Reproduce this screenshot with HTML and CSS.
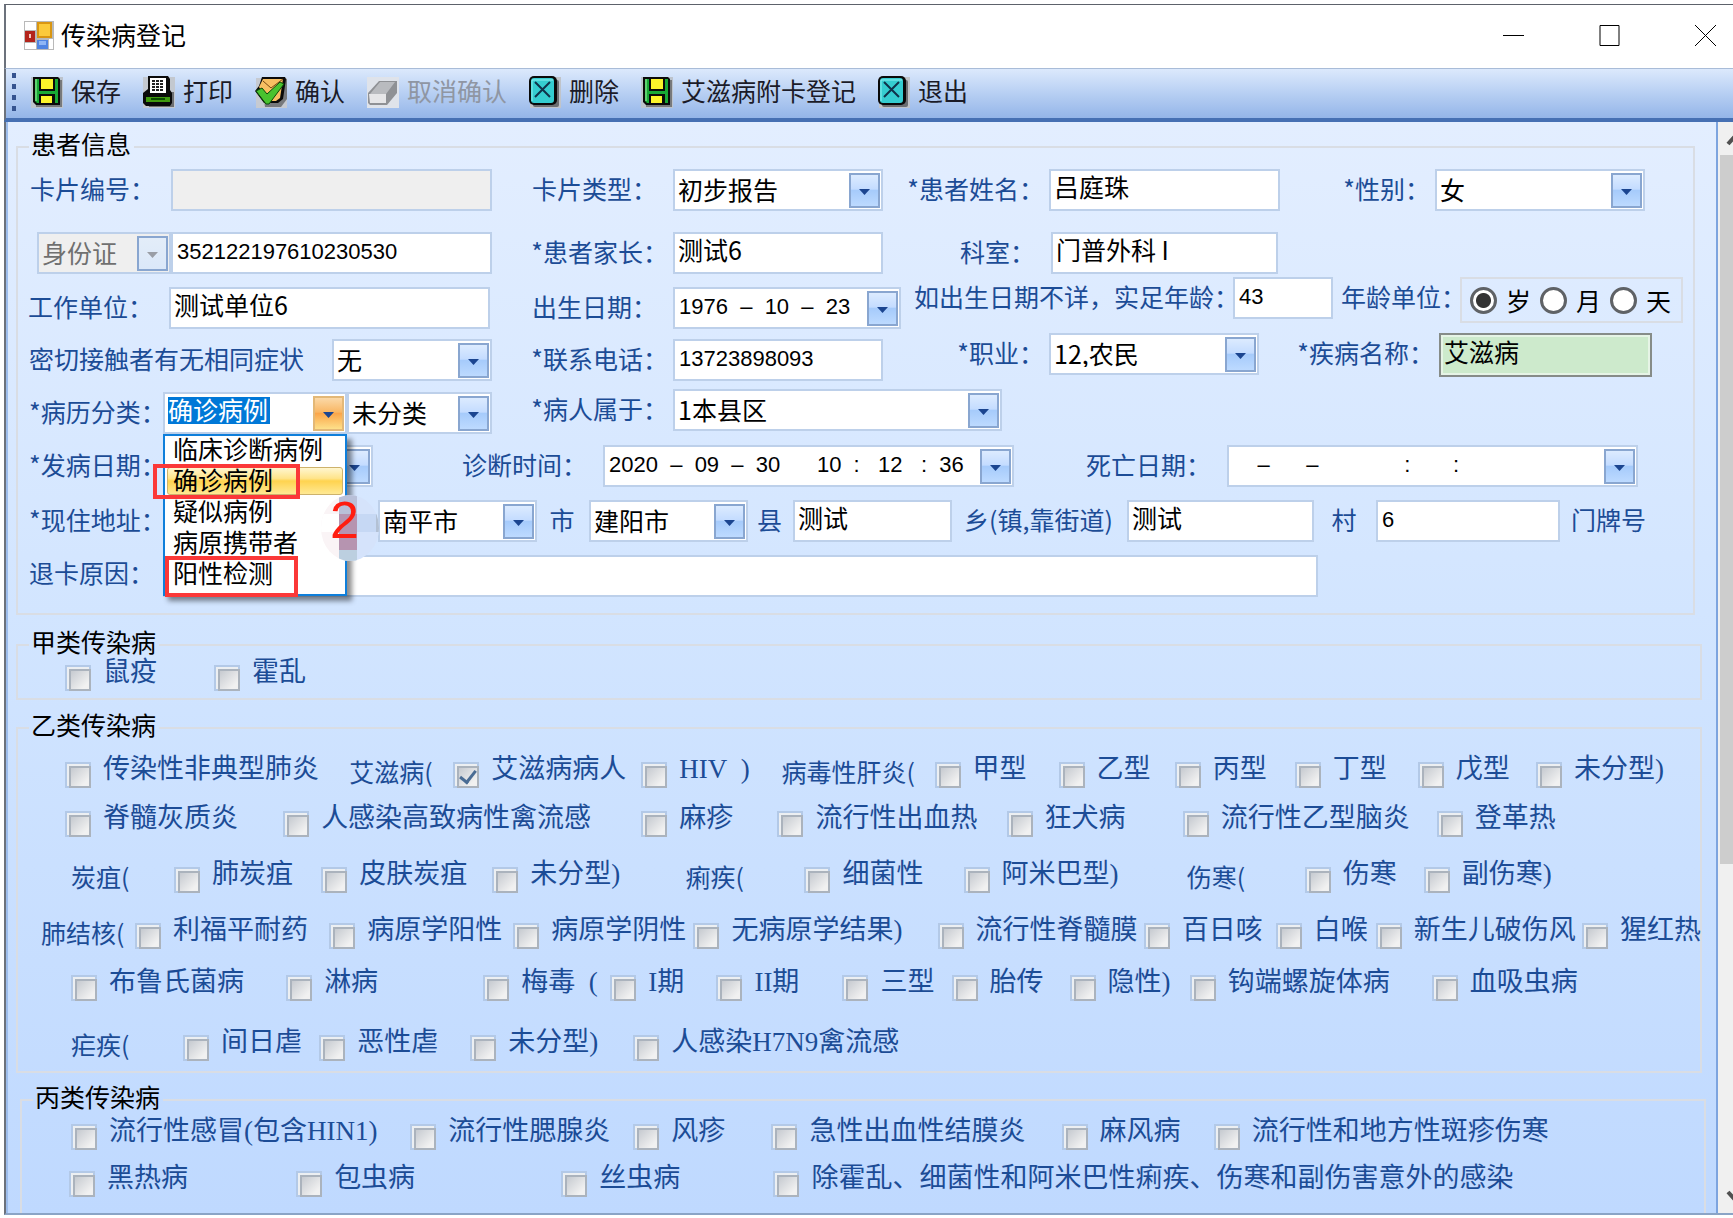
FILE: index.html
```html
<!DOCTYPE html>
<html lang="zh-CN">
<head>
  <meta charset="UTF-8">
  <link rel="stylesheet" href="styles.css">

  <title>传染病登记</title>
</head>
<body>
  <!-- shared toolbar icons -->
  <svg class="defs" aria-hidden="true">
    <symbol id="icon-save" viewBox="0 0 32 32">
      <rect x="0" y="1" width="32" height="31" fill="#bcc3cc"/>
      <path d="M5 4h26v27H5z" fill="#77797c"/>
      <path d="M2 1h25l2 2v26H5l-3-3z" fill="#0a0a0a"/>
      <path d="M4 3h23v24H6l-2-2z" fill="#18a835"/>
      <path d="M8 2h16v13H8z" fill="#0a0a0a"/>
      <path d="M10 3h12v10H10z" fill="#fbf42a"/>
      <path d="M8 18h16v10H8z" fill="#0a0a0a"/>
      <path d="M10 20h11v7H10z" fill="#fbf42a"/>
      <path d="M4 3h2v22H4z" fill="#5fd070"/>
    </symbol>
    <symbol id="icon-print" viewBox="0 0 32 32">
      <rect x="0" y="1" width="32" height="31" fill="#c3c8cf"/>
      <path d="M4 16h27v15H6z" fill="#6d6f72"/>
      <path d="M5 0h20l2 3v11l2 3v10l-2 3H3l-3-3V17l5-4z" fill="#0a0a0a"/>
      <path d="M7 2h16v15H7z" fill="#fff"/>
      <path d="M9 5h12M9 8h12M9 11h12M9 14h12" stroke="#222" stroke-width="2" stroke-dasharray="3 1"/>
      <path d="M3 21h24v5H3z" fill="#3f9a10"/>
      <path d="M8 23h14" stroke="#0a4a00" stroke-width="2"/>
    </symbol>
    <symbol id="icon-ok" viewBox="0 0 32 32">
      <rect x="1" y="2" width="31" height="30" fill="#c6cad1"/>
      <path d="M6 3h26v20l-6 8H10z" fill="#77797c"/>
      <path d="M7 1h23l1 2-3 20-5 4H9L0 15l4-5z" fill="#0a0a0a"/>
      <path d="M8 3h20l-3 19-4 3h-8L4 11z" fill="#f7bf62"/>
      <path d="M8 5l8 7L28 3" fill="none" stroke="#7a4a12" stroke-width="1"/>
      <path d="M1 15l6-3 5 6L25 6l4 2-15 20h-3z" fill="#49c22f" stroke="#0b4a08"/>
    </symbol>
    <symbol id="icon-undo" viewBox="0 0 32 32">
      <rect x="0" y="1" width="32" height="31" fill="#dfe3ea"/>
      <path d="M1 17L12 5h18v12L20 29H3l-2-2z" fill="#8f9195"/>
      <path d="M3 18L13 6h15l-9 12z" fill="#b9bbbf"/>
      <path d="M2 18h17v9H3z" fill="#e6e6e8"/>
    </symbol>
    <symbol id="icon-delete" viewBox="0 0 32 32">
      <rect x="1" y="1" width="31" height="31" fill="#c0c4ca"/>
      <rect x="4" y="4" width="26" height="27" rx="2" fill="#6c6e71"/>
      <rect x="0" y="0" width="28" height="29" rx="5" fill="#0a0a0a"/>
      <rect x="2" y="2" width="23" height="25" rx="3" fill="#35cdd0"/>
      <path d="M3 25V4h21" fill="none" stroke="#8df0f0"/>
      <path d="M6 6l15 15M21 6L6 21" stroke="#10324a" stroke-width="2"/>
    </symbol>
  </svg>

  <div class="window">
    <header class="titlebar">
      <svg class="app-icon" viewBox="0 0 30 30">
        <rect width="30" height="29" fill="#b9b9b9"/>
        <path d="M1 1h11v8H1zM1 22h11v6H1zM25 18h4v10h-4z" fill="#fff"/>
        <rect x="13" y="1" width="15" height="16" fill="#d99612"/>
        <rect x="15" y="3" width="11" height="12" fill="#fbca3b"/>
        <rect x="1" y="10" width="10" height="11" fill="#b3241b"/>
        <rect x="5" y="13" width="2" height="4" fill="#f7c6bd"/>
        <rect x="13" y="19" width="11" height="9" fill="#4f84e2"/>
        <rect x="15" y="20" width="7" height="4" fill="#8fb6f5"/>
      </svg>
      <h1>传染病登记</h1>
      <button class="win-btn" aria-label="最小化"><svg viewBox="0 0 21 21"><path d="M0 10.500h21"/></svg></button>
      <button class="win-btn" aria-label="最大化"><svg viewBox="0 0 21 21"><path d="M1 .5h19v20H1z"/></svg></button>
      <button class="win-btn" aria-label="关闭"><svg viewBox="0 0 21 21"><path d="M0 0l21 21M21 0L0 21"/></svg></button>
    </header>

    <nav class="toolbar">
      <span class="grip"></span>
      <button><svg><use href="#icon-save"/></svg>保存</button>
      <button><svg><use href="#icon-print"/></svg>打印</button>
      <button><svg><use href="#icon-ok"/></svg>确认</button>
      <button disabled><svg><use href="#icon-undo"/></svg>取消确认</button>
      <button><svg><use href="#icon-delete"/></svg>删除</button>
      <button><svg><use href="#icon-save"/></svg>艾滋病附卡登记</button>
      <button><svg><use href="#icon-delete"/></svg>退出</button>
    </nav>

    <div class="content">
      <form class="panel">
        <fieldset class="group patient">
          <legend>患者信息</legend>

          <div class="row row-card">
            <label for="card-no">卡片编号：</label>
            <input id="card-no" type="text" disabled>
            <label for="card-type">卡片类型：</label>
            <div class="combo"><select id="card-type"><option>初步报告</option></select><span class="drop"></span></div>
            <label class="tight" for="name">*患者姓名：</label>
            <input id="name" type="text" value="吕庭珠">
            <label class="tight" for="sex">*性别：</label>
            <div class="combo"><select id="sex"><option>女</option></select><span class="drop"></span></div>
          </div>

          <div class="row row-id">
            <div class="combo off"><select id="id-type" aria-label="证件类型" disabled><option>身份证</option></select><span class="drop"></span></div>
            <input class="num" id="id-no" type="text" aria-label="证件号码" value="352122197610230530">
            <label class="tight" for="parent">*患者家长：</label>
            <input id="parent" type="text" value="测试6">
            <label for="dept">科室：</label>
            <input id="dept" type="text" value="门普外科 I">
          </div>

          <div class="row row-birth">
            <label for="company">工作单位：</label>
            <input id="company" type="text" value="测试单位6">
            <label for="birthday">出生日期：</label>
            <div class="combo"><input class="num" id="birthday" type="text" value="1976  –  10  –  23"><button class="drop" type="button" aria-label="选择日期"></button></div>
            <label class="raised snug" for="age">如出生日期不详，实足年龄：</label>
            <input class="num raised" id="age" type="text" value="43">
            <span class="caption raised snug" id="age-unit">年龄单位：</span>
            <div class="radios raised" role="radiogroup" aria-labelledby="age-unit">
              <label><input type="radio" name="unit" checked>岁</label>
              <label><input type="radio" name="unit">月</label>
              <label><input type="radio" name="unit">天</label>
            </div>
          </div>

          <div class="row row-contact">
            <label class="lead" for="contact">密切接触者有无相同症状</label>
            <div class="combo"><select id="contact"><option>无</option></select><span class="drop"></span></div>
            <label class="tight" for="phone">*联系电话：</label>
            <input class="num" id="phone" type="text" value="13723898093">
            <label class="tight raised" for="job">*职业：</label>
            <div class="combo raised"><select id="job"><option>12,农民</option></select><span class="drop"></span></div>
            <label class="tight raised" for="disease">*疾病名称：</label>
            <input class="disease raised" id="disease" type="text" value="艾滋病">
          </div>

          <div class="row row-class">
            <label class="lead" for="case-type">*病历分类：</label>
            <div class="combo open">
              <input id="case-type" type="text" role="combobox" aria-expanded="true" aria-controls="case-list" value="确诊病例">
              <button class="drop" type="button" aria-label="展开"></button>
              <ul class="list" id="case-list" role="listbox">
                <li role="option">临床诊断病例</li>
                <li role="option" class="active" aria-selected="true">确诊病例</li>
                <li role="option">疑似病例</li>
                <li role="option">病原携带者</li>
                <li role="option">阳性检测</li>
              </ul>
              <span class="frame frame-confirmed"></span>
              <span class="frame frame-positive"></span>
            </div>
            <div class="combo"><select id="case-sub" aria-label="病例子类"><option>未分类</option></select><span class="drop"></span></div>
            <label class="tight raised" for="belong">*病人属于：</label>
            <div class="combo raised"><select id="belong"><option>1本县区</option></select><span class="drop"></span></div>
          </div>

          <div class="row row-dates">
            <label class="lead" for="onset">*发病日期：</label>
            <div class="combo"><input class="num" id="onset" type="text"><button class="drop" type="button" aria-label="选择日期"></button></div>
            <label for="diagnosed">诊断时间：</label>
            <div class="combo"><input class="num" id="diagnosed" type="text" value="2020  –  09  –  30      10  :   12   :  36"><button class="drop" type="button" aria-label="选择时间"></button></div>
            <label for="death">死亡日期：</label>
            <div class="combo"><input class="num" id="death" type="text" value="    –      –              :       :"><button class="drop" type="button" aria-label="选择日期"></button></div>
          </div>

          <div class="row row-address">
            <label class="lead" for="province">*现住地址：</label>
            <div class="combo"><select id="province"><option></option></select><span class="drop"></span></div>
            <div class="step">
              <svg viewBox="0 0 60 68">
                <clipPath id="step-clip"><ellipse cx="30" cy="34" rx="29" ry="33"/></clipPath>
                <g clip-path="url(#step-clip)">
                  <path d="M0 0h27v68H0z" fill="#faf4f6"/>
                  <path d="M27 0h33v68H27z" fill="#d5e3fb"/>
                  <path d="M0 20h20v18H0z" fill="#fff"/>
                  <path d="M36 20h20v18H36z" fill="#c6d8f4"/>
                  <path d="M56 20h4v18h-4z" fill="#b3c1d4"/>
                  <path d="M19 0h18v20H19z" fill="#b9c0d8"/>
                  <path d="M19 20h18v36H19z" fill="#b694b0"/>
                  <path d="M19 56h18v12H19z" fill="#bccfe0"/>
                </g>
              </svg>
              <b>2</b>
            </div>
            <div class="combo"><select id="city" aria-label="市"><option>南平市</option></select><span class="drop"></span></div>
            <label class="unit" for="city">市</label>
            <div class="combo"><select id="county" aria-label="县"><option>建阳市</option></select><span class="drop"></span></div>
            <label class="unit" for="county">县</label>
            <input id="town" type="text" value="测试">
            <label class="unit" for="town">乡(镇,靠街道)</label>
            <input id="village" type="text" value="测试">
            <label class="unit" for="village">村</label>
            <input class="num" id="door" type="text" value="6">
            <label class="lead" for="door">门牌号</label>
          </div>

          <div class="row row-reason">
            <label class="lead raised" for="reason">退卡原因：</label>
            <input id="reason" type="text">
          </div>
        </fieldset>

        <fieldset class="group class-a">
          <legend>甲类传染病</legend>
          <div class="checks checks-a">
            <label><input type="checkbox">鼠疫</label>
            <label><input type="checkbox">霍乱</label>
          </div>
        </fieldset>

        <fieldset class="group class-b">
          <legend>乙类传染病</legend>
          <div class="checks checks-b1">
            <label><input type="checkbox">传染性非典型肺炎</label>
            <span>艾滋病(</span>
            <label><input type="checkbox" checked>艾滋病病人</label>
            <label><input type="checkbox">HIV&nbsp;&nbsp;)</label>
            <span>病毒性肝炎(</span>
            <label><input type="checkbox">甲型</label>
            <label><input type="checkbox">乙型</label>
            <label><input type="checkbox">丙型</label>
            <label><input type="checkbox">丁型</label>
            <label><input type="checkbox">戊型</label>
            <label><input type="checkbox">未分型)</label>
          </div>
          <div class="checks checks-b2">
            <label><input type="checkbox">脊髓灰质炎</label>
            <label><input type="checkbox">人感染高致病性禽流感</label>
            <label><input type="checkbox">麻疹</label>
            <label><input type="checkbox">流行性出血热</label>
            <label><input type="checkbox">狂犬病</label>
            <label><input type="checkbox">流行性乙型脑炎</label>
            <label><input type="checkbox">登革热</label>
          </div>
          <div class="checks checks-b3">
            <span>炭疽(</span>
            <label><input type="checkbox">肺炭疽</label>
            <label><input type="checkbox">皮肤炭疽</label>
            <label><input type="checkbox">未分型)</label>
            <span>痢疾(</span>
            <label><input type="checkbox">细菌性</label>
            <label><input type="checkbox">阿米巴型)</label>
            <span>伤寒(</span>
            <label><input type="checkbox">伤寒</label>
            <label><input type="checkbox">副伤寒)</label>
          </div>
          <div class="checks checks-b4">
            <span>肺结核(</span>
            <label><input type="checkbox">利福平耐药</label>
            <label><input type="checkbox">病原学阳性</label>
            <label><input type="checkbox">病原学阴性</label>
            <label><input type="checkbox">无病原学结果)</label>
            <label><input type="checkbox">流行性脊髓膜</label>
            <label><input type="checkbox">百日咳</label>
            <label><input type="checkbox">白喉</label>
            <label><input type="checkbox">新生儿破伤风</label>
            <label><input type="checkbox">猩红热</label>
          </div>
          <div class="checks checks-b5">
            <label><input type="checkbox">布鲁氏菌病</label>
            <label><input type="checkbox">淋病</label>
            <label><input type="checkbox">梅毒&nbsp;&nbsp;(</label>
            <label><input type="checkbox">I期</label>
            <label><input type="checkbox">II期</label>
            <label><input type="checkbox">三型</label>
            <label><input type="checkbox">胎传</label>
            <label><input type="checkbox">隐性)</label>
            <label><input type="checkbox">钩端螺旋体病</label>
            <label><input type="checkbox">血吸虫病</label>
          </div>
          <div class="checks checks-b6">
            <span>疟疾(</span>
            <label><input type="checkbox">间日虐</label>
            <label><input type="checkbox">恶性虐</label>
            <label><input type="checkbox">未分型)</label>
            <label><input type="checkbox">人感染H7N9禽流感</label>
          </div>
        </fieldset>

        <fieldset class="group class-c">
          <legend>丙类传染病</legend>
          <div class="checks checks-c1">
            <label><input type="checkbox">流行性感冒(包含HIN1)</label>
            <label><input type="checkbox">流行性腮腺炎</label>
            <label><input type="checkbox">风疹</label>
            <label><input type="checkbox">急性出血性结膜炎</label>
            <label><input type="checkbox">麻风病</label>
            <label><input type="checkbox">流行性和地方性斑疹伤寒</label>
          </div>
          <div class="checks checks-c2">
            <label><input type="checkbox">黑热病</label>
            <label><input type="checkbox">包虫病</label>
            <label><input type="checkbox">丝虫病</label>
            <label><input type="checkbox">除霍乱、细菌性和阿米巴性痢疾、伤寒和副伤害意外的感染</label>
          </div>
        </fieldset>
      </form>

      <div class="scrollbar">
        <svg viewBox="0 0 13 33"><path d="M8 22l9-10 9 10"/></svg>
        <span class="thumb"></span>
        <svg viewBox="0 0 13 33"><path d="M8 12l9 10 9-10"/></svg>
      </div>
    </div>
  </div>
</body>
</html>
```

FILE: styles.css
```css
* {
  box-sizing: border-box;
}

body {
  margin: 0;
  background-color: #fff;
  font-family: "Noto Sans CJK SC", sans-serif;
  font-size: 25px;
  color: #1c4c96;
}

button,
input,
select {
  font: inherit;
  color: #000;
}

.defs {
  display: none;
}

.window {
  display: flex;
  flex-direction: column;
  height: 100vh;
  padding: 4px 0 3px 4px;
}

/* Title bar */
.titlebar {
  display: flex;
  align-items: center;
  gap: 75px;
  height: 64px;
  padding: 0 17px 2px 18px;
  border-top: 1px solid #5d626b;
  border-left: 2px solid #6c727c;
}

.app-icon {
  width: 30px;
  height: 30px;
}

.titlebar h1 {
  flex: 1;
  margin: 0 0 0 -68px;
  padding-bottom: 4px;
  font-size: 25px;
  font-weight: normal;
  color: #000;
}

.win-btn {
  width: 21px;
  height: 21px;
  padding: 0;
  border: none;
  background: none;
}

.win-btn svg {
  display: block;
  fill: none;
  stroke: #000;
}

/* Toolbar */
.toolbar {
  display: flex;
  align-items: center;
  gap: 21px;
  height: 54px;
  padding: 0 0 3px 6px;
  border-top: 1px solid #a9bcd8;
  border-bottom: 4px solid #4670b3;
  border-left: 2px solid #6c727c;
  background: linear-gradient(#dce9fc, #b7cff3 50%, #94b5e8);
}

.grip {
  width: 4px;
  height: 38px;
  margin-right: -6px;
  background: repeating-linear-gradient(#35538f 0 5px, transparent 5px 11px);
}

.toolbar button {
  display: flex;
  align-items: flex-start;
  gap: 8px;
  padding: 0 1px 0 0;
  border: none;
  background: none;
  line-height: 29px;
  white-space: nowrap;
  color: #1b1b28;
}

.toolbar button:disabled {
  color: #8f96a3;
}

.toolbar svg {
  width: 32px;
  height: 32px;
}

/* Form panel */
.content {
  flex: 1;
  display: flex;
  min-height: 0;
  border-bottom: 2px solid #8ba4c6;
  border-left: 2px solid #6c727c;
}

.panel {
  flex: 1;
  min-width: 0;
  padding: 12px 0 0 8px;
  overflow: hidden;
  border-left: 2px solid #9dbdec;
  border-right: 2px solid #7da4df;
  background: linear-gradient(#e3eeff, #d2e5ff 45%, #bfd9ff);
}

.group {
  min-width: 0;
  margin: 0 14px 0 0;
  padding: 0;
  border: 2px solid #d9dde4;
}

.group legend {
  margin-left: 11px;
  padding: 0 3px 8px 2px;
  line-height: 18px;
  color: #000;
}

.patient {
  margin-right: 21px;
  padding-bottom: 16px;
}

.class-a {
  margin-top: 17px;
  padding-bottom: 6px;
}

.class-b {
  margin-top: 15px;
  padding-bottom: 9px;
}

.class-c {
  height: 200px;
  margin: 14px 10px 0 4px;
}

/* Patient rows, the columns keep their proportions when the window resizes */
.row {
  display: grid;
  align-items: end;
}

.row > * {
  min-width: 0;
}

.row > label,
.caption {
  padding: 0 16px 3px 0;
  line-height: 39px;
  text-align: right;
  white-space: nowrap;
}

.row > .tight {
  padding-right: 5px;
}

.row > .snug {
  margin-right: -6px;
  padding-right: 0;
}

.row > .lead {
  padding-right: 0;
  padding-left: 11px;
  text-align: left;
}

.row > .unit {
  padding-right: 2px;
  text-align: center;
}

.row > .raised {
  align-self: start;
}

.row-card {
  grid-template-columns: 153fr 321fr 181fr 210fr 166fr 231fr 155fr 210fr 48fr;
  margin-top: 9px;
}

.row-id {
  grid-template-columns: 153fr 321fr 181fr 210fr 168fr 227fr 415fr;
  margin-top: 21px;
}

.row-birth {
  grid-template-columns: 151fr 321fr 183fr 228fr 332fr 100fr 127fr 223fr 10fr;
  min-height: 52px;
  margin-top: 3px;
}

.row-contact {
  grid-template-columns: 314fr 160fr 181fr 210fr 166fr 210fr 180fr 213fr 41fr;
  min-height: 48px;
  margin-top: 4px;
}

.row-class {
  grid-template-columns: 145fr 184fr 145fr 181fr 329fr 691fr;
  min-height: 45px;
  margin-top: 8px;
}

.row-dates {
  grid-template-columns: 145fr 210fr 230fr 411fr 213fr 411fr 55fr;
  margin-top: 11px;
}

.row-address {
  grid-template-columns: 145fr 184fr 31fr 159fr 52fr 159fr 45fr 159fr 175fr 187fr 62fr 184fr 133fr;
  margin-top: 13px;
}

.row-reason {
  grid-template-columns: 145fr 1155fr 375fr;
  margin-top: 13px;
}

.row-reason > label {
  line-height: 34px;
}

input[type="text"],
select {
  display: block;
  width: 100%;
  height: 42px;
  padding: 0 4px 9px 3px;
  border: 2px solid #bdd0ea;
  border-radius: 0;
  outline: none;
  background-color: #fff;
  appearance: none;
}

select {
  padding-bottom: 6px;
}

input.num {
  padding-bottom: 3px;
  padding-left: 4px;
  font-family: "Liberation Sans", Arial, sans-serif;
  font-size: 22px;
}

input:disabled,
select:disabled {
  background-color: #efefef;
  color: #707070;
  opacity: 1;
}

input.disease {
  height: 44px;
  border-color: #868c88;
  background-color: #cdeacc;
  box-shadow: inset 0 0 0 2px #e6f4e6;
}

.combo {
  position: relative;
}

.combo.off {
  margin-left: 19px;
}

.drop {
  position: absolute;
  top: 4px;
  right: 3px;
  width: 31px;
  height: 35px;
  padding: 0;
  border: 2px solid #89a6d0;
  background: linear-gradient(#dcebff, #c4dcff 45%, #a6cbfb 50%, #bddaff);
  pointer-events: none;
}

.drop::before {
  content: "";
  position: absolute;
  top: 14px;
  left: 8px;
  width: 11px;
  height: 6px;
  background-color: #1b4590;
  clip-path: polygon(0 0, 100% 0, 50% 100%);
}

.off .drop {
  background: linear-gradient(#e3edf9, #dbe8f9);
}

.off .drop::before {
  background-color: #9a9ea6;
}

.open .drop {
  border-color: #e3b877;
  background: linear-gradient(#fbd9a8, #f9b765 45%, #fba64a 50%, #fde08a);
}

/* the value in the open combo is selected */
.open > input[type="text"] {
  color: #fff;
  background: linear-gradient(#0078d7, #0078d7) 3px 3px / 102px 27px no-repeat #fff;
}

.list {
  position: absolute;
  z-index: 2;
  top: 100%;
  left: 0;
  width: 100%;
  margin: 0;
  padding: 0 2px 3px 2px;
  border: 2px solid #0f7fdb;
  background-color: #fff;
  box-shadow: 5px 5px 5px rgba(0, 0, 0, 0.45);
  list-style: none;
  line-height: 23px;
  color: #000;
}

.list li {
  margin-bottom: 3px;
  padding: 0 0 3px 5px;
  border: 1px solid transparent;
  white-space: nowrap;
}

.list .active {
  border-color: #cdb26c;
  border-radius: 3px;
  background: linear-gradient(#fff6cf, #ffe48a 40%, #ffd34f 50%, #ffe994);
}

/* red callouts */
.frame {
  position: absolute;
  z-index: 3;
  border: 4px solid #fb3838;
}

.frame-confirmed {
  top: 72px;
  left: -10px;
  width: 147px;
  height: 35px;
}

.frame-positive {
  top: 164px;
  left: 2px;
  width: 133px;
  height: 41px;
}

.step {
  position: relative;
  z-index: 4;
  height: 42px;
}

.step svg {
  position: absolute;
  top: -6px;
  left: -27px;
  width: 60px;
  height: 68px;
}

.step b {
  position: absolute;
  top: -10px;
  left: -17px;
  font-family: "Liberation Sans", Arial, sans-serif;
  font-size: 52px;
  font-weight: normal;
  line-height: 60px;
  color: #ff1d10;
}

.radios {
  display: flex;
  align-items: center;
  gap: 9px;
  height: 46px;
  padding-left: 8px;
  border: 2px solid #d9dde4;
}

.radios label {
  display: flex;
  align-items: center;
  gap: 9px;
  color: #000;
}

.radios input {
  width: 27px;
  height: 27px;
  margin: 0;
  border: 3px solid #5f6266;
  border-radius: 50%;
  background-color: #fff;
  appearance: none;
}

.radios input:checked {
  background: radial-gradient(#333 0 7px, #fff 8px);
}

/* Disease check lists */
.checks {
  display: grid;
  padding-left: 53px;
}

.checks > * {
  min-width: 0;
  height: 34px;
  white-space: nowrap;
}

.checks span {
  line-height: 33px;
}

.checks label {
  display: flex;
  align-items: flex-start;
  gap: 12px;
  font-family: "Liberation Serif", "Noto Sans CJK SC", serif;
  font-size: 27px;
  line-height: 29px;
}

.checks input {
  position: relative;
  flex: none;
  width: 26px;
  height: 26px;
  margin: 7px 0 0 0;
  border: 2px solid #b3c9e7;
  background-color: #eceff2;
  appearance: none;
}

.checks input::before {
  content: "";
  display: block;
  width: 18px;
  height: 18px;
  margin: 2px;
  border: 2px solid #abb3bd;
  background: linear-gradient(135deg, #c6cad0, #f1f1f1 80%);
}

.checks input:checked::after {
  content: "";
  position: absolute;
  top: 3px;
  left: 8px;
  width: 7px;
  height: 13px;
  border: solid #4a6c94;
  border-width: 0 3px 3px 0;
  transform: rotate(38deg);
}

.checks-a {
  grid-template-columns: 149fr 1485fr;
  padding-left: 47px;
}

.checks-b1 {
  grid-template-columns: 284fr 104fr 188fr 140fr 153fr 124fr 116fr 120fr 123fr 118fr 164fr;
  margin-top: 14px;
  padding-left: 47px;
}

.checks-b2 {
  grid-template-columns: 218fr 358fr 136fr 229fr 176fr 254fr 263fr;
  margin-top: 15px;
  padding-left: 47px;
}

.checks-b3 {
  grid-template-columns: 103fr 147fr 171fr 193fr 119fr 159fr 223fr 118fr 119fr 276fr;
  margin-top: 22px;
}

.checks-b4 {
  grid-template-columns: 94fr 194fr 184fr 180fr 244fr 206fr 132fr 100fr 206fr 118fr;
  margin-top: 22px;
  padding-left: 23px;
}

.checks-b5 {
  grid-template-columns: 215fr 197fr 127fr 106fr 126fr 109fr 118fr 120fr 242fr 268fr;
  margin-top: 18px;
}

.checks-b6 {
  grid-template-columns: 112fr 136fr 151fr 163fr 1066fr;
  margin-top: 26px;
}

.checks-c1 {
  grid-template-columns: 339fr 223fr 138fr 290fr 152fr 490fr;
  margin-top: 4px;
  padding-left: 49px;
}

.checks-c2 {
  grid-template-columns: 227fr 265fr 212fr 930fr;
  margin-top: 13px;
  padding-left: 47px;
}

/* Scrollbar */
.scrollbar {
  display: flex;
  flex-direction: column;
  width: 15px;
  padding-left: 2px;
  background-color: #f0f0f0;
}

.scrollbar svg {
  flex: none;
  width: 13px;
  height: 33px;
  fill: none;
  stroke: #505050;
  stroke-width: 4px;
}

.thumb {
  height: 65%;
  margin-bottom: auto;
  background-color: #cdcdcd;
}
```
